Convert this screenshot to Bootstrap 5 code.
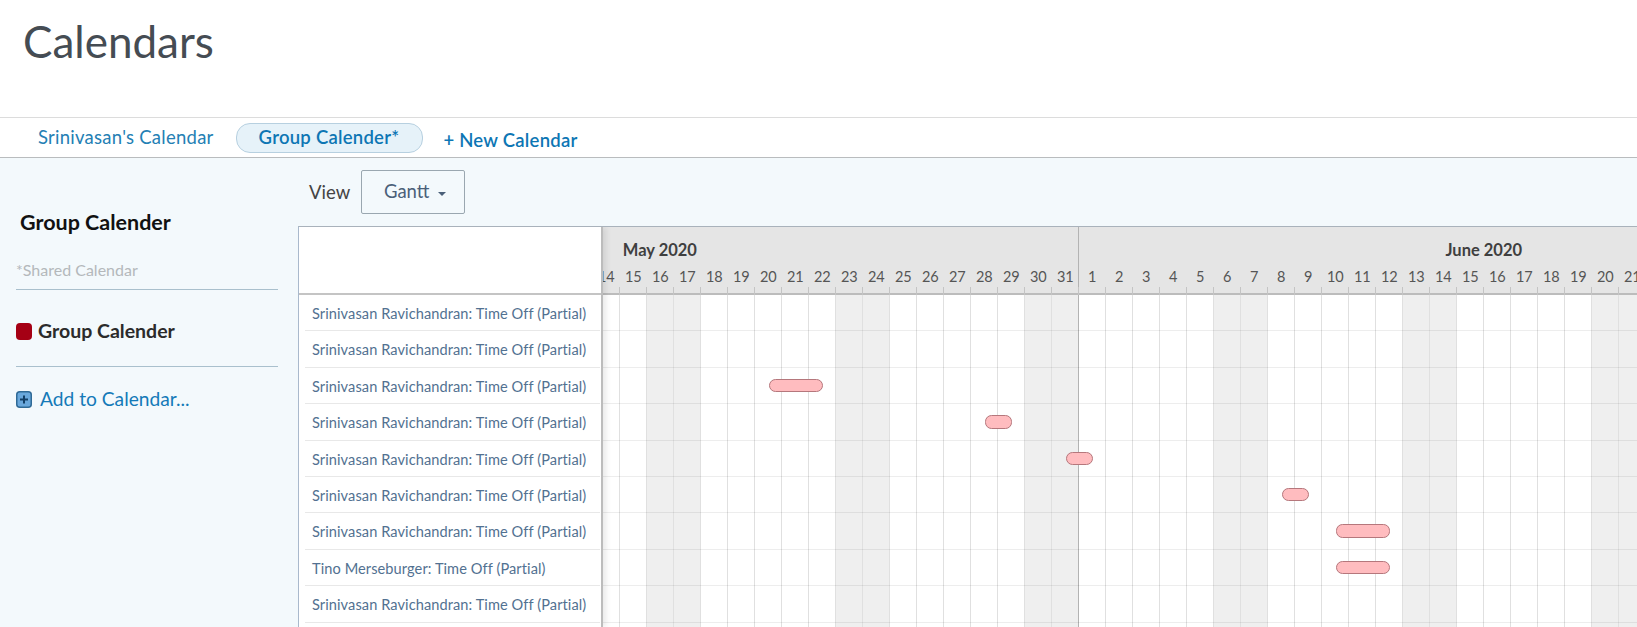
<!DOCTYPE html>
<html lang="en">
<head>
<meta charset="utf-8">
<title>Calendars</title>
<link href="https://cdn.jsdelivr.net/npm/bootstrap@5.3.0/dist/css/bootstrap.min.css" rel="stylesheet">
<style>
html,body{height:100%;overflow:hidden}
body{font-family:"Lato","Liberation Sans",sans-serif;background:#fff;display:flex;flex-direction:column}
.page-head{height:118px;flex:none;border-bottom:1px solid #dcdcdc;padding:15px 0 0 23px}
.page-head h1{font-size:44px;font-weight:400;color:#454c53;line-height:52px;margin:0}
.cal-tabs{height:40px;flex:none;border-bottom:1px solid #b9bcbe;padding:5px 0 0 16px;align-items:flex-start;gap:0}
.cal-tabs .nav-link{color:#2480b4;font-size:18.5px;letter-spacing:.25px;padding:0 21px;height:30px;line-height:27px;border:1px solid transparent;border-radius:14px;background:none;white-space:nowrap}
.cal-tabs .nav-link.active{background:#e6f2f9;border-color:#b7d0e0;color:#0d76b4;font-weight:600;padding:0 23px 0 22px}
.cal-tabs .nav-link.add-cal{font-weight:600;color:#0d76b4;padding:0 0 0 19px;line-height:32px;height:32px}
.pane{flex:1 1 auto;min-height:0;background:#f3f9fc;display:flex}
.side{width:298px;flex:none;padding:52px 20px 0 16px}
.side-title{font-size:21.5px;font-weight:700;color:#111;margin:0 0 0 4px;line-height:24px}
.side-note{font-size:16px;color:#b4b8bb;line-height:20px;margin-top:26px;padding-bottom:9px;border-bottom:1px solid #a9c0cd}
.side-cal{display:flex;align-items:center;gap:6px;height:77px;border-bottom:1px solid #a9c0cd;font-size:19.5px;font-weight:700;color:#2b2b2b;padding-top:6px}
.swatch{width:16px;height:17px;border-radius:4px;background:#a50014;flex:none}
.side-add{display:flex;align-items:center;gap:8px;margin-top:20px;font-size:19.2px;color:#147ab8;text-decoration:none;line-height:24px}
.main-col{flex:1 1 auto;min-width:0;display:flex;flex-direction:column}
.view-bar{height:68px;flex:none;display:flex;align-items:flex-start;padding:12px 0 0 11px;gap:11px}
.view-bar label{font-size:18.5px;color:#444;line-height:44px;margin:0}
.view-btn.btn{height:44px;width:104px;border:1px solid #9aa7b0;border-radius:2px;background:transparent;color:#4a6079;font-size:18.5px;padding:0 0 0 4px}
.view-btn.dropdown-toggle::after{vertical-align:2px;margin-left:9px;border-top-width:.25em;border-left-width:.25em;border-right-width:.25em}
.gantt{flex:1 1 auto;min-height:0;display:flex;background:#fff;border-top:1px solid #a9b2bb;border-left:1px solid #a9b9cc;overflow:hidden}
.gl{width:304px;flex:none;border-right:2px solid #bcbcbc;box-shadow:3px 0 6px rgba(0,0,0,.09);position:relative;z-index:2;background:#fff}
.gl-head{height:68px;border-bottom:2px solid #c4c4c4}
.gl .list-group-item{height:36.4px;padding:0 0 0 7px;margin-left:6px;margin-right:1px;line-height:37px;font-size:14.6px;letter-spacing:.08px;color:#527191;background:transparent;border-color:#e8e8e8;white-space:nowrap}
.gr{flex:1 1 auto;min-width:0;overflow:hidden}
.gr-in{width:1296px;margin-left:-10.2px}
.gh{height:68px;background:#e5e5e5;border-bottom:2px solid #bcbcbc;display:flex;flex-direction:column;position:relative}
.gh-months{display:flex;height:32px;flex:none}
.m-may{width:486px;flex:none;padding:14px 0 0 30px}
.m-jun{width:810px;flex:none;text-align:center;padding-top:14px}
.gh-months span{font-size:16.5px;font-weight:700;color:#3f3f3f;line-height:18px;display:block;white-space:nowrap}
.gh-days{display:flex;flex:1}
.dl{width:27px;flex:none;text-align:center;font-size:14.5px;color:#555;line-height:20px;padding-top:8px;position:relative}
.dl::after{content:"";display:block;width:1px;height:9px;background:#c4c4c4;margin-left:26px;margin-top:0}
.month-rule{width:1px;background:#b3b3b3;position:absolute;left:485px;top:0;bottom:0}
.gb{display:grid;position:relative}
.gcols,.grows{grid-area:1/1}
.gcols{display:flex;height:340px}
.dc{width:27px;flex:none;border-right:1px solid #e0e0e0}
.dc.we{background:#efefef}
.dc.me{border-right-color:#b3b3b3}
.grows{position:relative}
.grw{height:36.4px;border-bottom:1px solid rgba(0,0,0,.07);display:flex;align-items:center}
.gbar{height:13.5px;background:#ffbcbf;border:1px solid #b5777c;border-radius:6.5px;flex:none}
</style>
</head>
<body>
<div class="page-head"><h1>Calendars</h1></div>
<ul class="nav cal-tabs">
  <li class="nav-item"><a class="nav-link" href="#">Srinivasan's Calendar</a></li>
  <li class="nav-item"><a class="nav-link active" href="#">Group Calender*</a></li>
  <li class="nav-item"><a class="nav-link add-cal" href="#">+ New Calendar</a></li>
</ul>
<div class="pane">
  <aside class="side">
    <h2 class="side-title">Group Calender</h2>
    <div class="side-note">*Shared Calendar</div>
    <div class="side-cal"><span class="swatch"></span><span>Group Calender</span></div>
    <a class="side-add" href="#">
      <svg width="16" height="17" viewBox="0 0 16 17" aria-hidden="true"><rect x=".75" y=".75" width="14.5" height="15.5" rx="3" fill="#69a8dc" stroke="#2f6a96" stroke-width="1.5"/><path d="M8 4.5v8M4 8.5h8" stroke="#123f66" stroke-width="2"/></svg>
      <span>Add to Calendar...</span>
    </a>
  </aside>
  <div class="main-col">
    <div class="view-bar">
      <label>View</label>
      <button class="btn view-btn dropdown-toggle" type="button">Gantt</button>
    </div>
    <div class="gantt">
      <div class="gl">
        <div class="gl-head"></div>
        <div class="list-group list-group-flush">
          <div class="list-group-item">Srinivasan Ravichandran: Time Off (Partial)</div>
          <div class="list-group-item">Srinivasan Ravichandran: Time Off (Partial)</div>
          <div class="list-group-item">Srinivasan Ravichandran: Time Off (Partial)</div>
          <div class="list-group-item">Srinivasan Ravichandran: Time Off (Partial)</div>
          <div class="list-group-item">Srinivasan Ravichandran: Time Off (Partial)</div>
          <div class="list-group-item">Srinivasan Ravichandran: Time Off (Partial)</div>
          <div class="list-group-item">Srinivasan Ravichandran: Time Off (Partial)</div>
          <div class="list-group-item">Tino Merseburger: Time Off (Partial)</div>
          <div class="list-group-item">Srinivasan Ravichandran: Time Off (Partial)</div>
          <div class="list-group-item"></div>
        </div>
      </div>
      <div class="gr"><div class="gr-in">
        <div class="gh">
          <div class="month-rule"></div>
          <div class="gh-months">
            <div class="m-may"><span>May 2020</span></div>
            <div class="m-jun"><span>June 2020</span></div>
          </div>
          <div class="gh-days">
            <div class="dl">14</div><div class="dl">15</div><div class="dl">16</div><div class="dl">17</div><div class="dl">18</div><div class="dl">19</div><div class="dl">20</div><div class="dl">21</div><div class="dl">22</div><div class="dl">23</div><div class="dl">24</div><div class="dl">25</div><div class="dl">26</div><div class="dl">27</div><div class="dl">28</div><div class="dl">29</div><div class="dl">30</div><div class="dl">31</div>
            <div class="dl">1</div><div class="dl">2</div><div class="dl">3</div><div class="dl">4</div><div class="dl">5</div><div class="dl">6</div><div class="dl">7</div><div class="dl">8</div><div class="dl">9</div><div class="dl">10</div><div class="dl">11</div><div class="dl">12</div><div class="dl">13</div><div class="dl">14</div><div class="dl">15</div><div class="dl">16</div><div class="dl">17</div><div class="dl">18</div><div class="dl">19</div><div class="dl">20</div><div class="dl">21</div><div class="dl">22</div>
          </div>
        </div>
        <div class="gb">
          <div class="gcols">
            <div class="dc"></div><div class="dc"></div><div class="dc we"></div><div class="dc we"></div><div class="dc"></div><div class="dc"></div><div class="dc"></div><div class="dc"></div><div class="dc"></div><div class="dc we"></div><div class="dc we"></div><div class="dc"></div><div class="dc"></div><div class="dc"></div><div class="dc"></div><div class="dc"></div><div class="dc we"></div><div class="dc we me"></div>
            <div class="dc"></div><div class="dc"></div><div class="dc"></div><div class="dc"></div><div class="dc"></div><div class="dc we"></div><div class="dc we"></div><div class="dc"></div><div class="dc"></div><div class="dc"></div><div class="dc"></div><div class="dc"></div><div class="dc we"></div><div class="dc we"></div><div class="dc"></div><div class="dc"></div><div class="dc"></div><div class="dc"></div><div class="dc"></div><div class="dc we"></div><div class="dc we"></div><div class="dc"></div>
          </div>
          <div class="grows">
            <div class="grw"></div>
            <div class="grw"></div>
            <div class="grw"><span class="gbar" style="margin-left:176px;width:54px"></span></div>
            <div class="grw"><span class="gbar" style="margin-left:392px;width:27px"></span></div>
            <div class="grw"><span class="gbar" style="margin-left:473px;width:27px"></span></div>
            <div class="grw"><span class="gbar" style="margin-left:689px;width:27px"></span></div>
            <div class="grw"><span class="gbar" style="margin-left:743px;width:54px"></span></div>
            <div class="grw"><span class="gbar" style="margin-left:743px;width:54px"></span></div>
            <div class="grw"></div>
            <div class="grw"></div>
          </div>
        </div>
      </div></div>
    </div>
  </div>
</div>
<script src="https://cdn.jsdelivr.net/npm/bootstrap@5.3.0/dist/js/bootstrap.bundle.min.js"></script>
</body>
</html>
